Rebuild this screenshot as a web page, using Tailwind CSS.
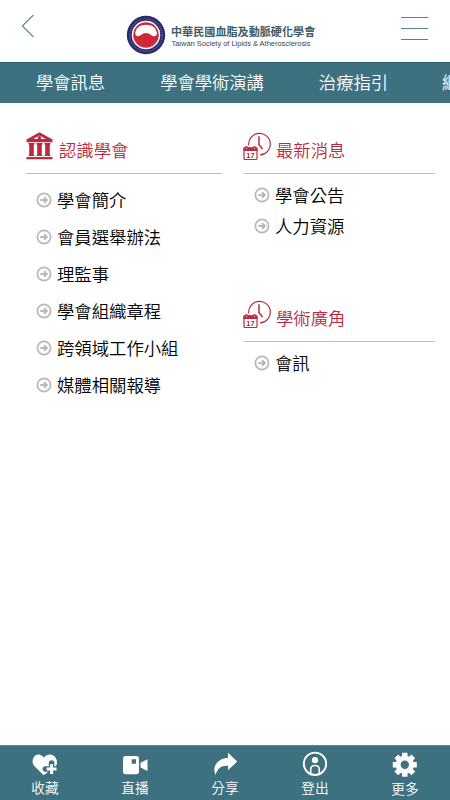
<!DOCTYPE html>
<html lang="zh-Hant">
<head>
<meta charset="utf-8">
<title>中華民國血脂及動脈硬化學會</title>
<script src="https://cdn.jsdelivr.net/npm/@tailwindcss/browser@4"></script>
</head>
<body class="w-[450px] h-[800px] overflow-hidden bg-white flex flex-col font-['Noto_Sans_CJK_TC',sans-serif] font-[350] text-black">
<svg class="hidden">
  <symbol id="arrow" viewBox="0 0 16 16"><circle cx="8" cy="8" r="6.6" fill="none" stroke="#b9b9b9" stroke-width="1.7"/><path d="M4.3 8H10M8 5.2L10.9 8L8 10.8" fill="none" stroke="#b9b9b9" stroke-width="1.9"/></symbol>
  <symbol id="calendar" viewBox="0 0 28 29">
    <path d="M5.8 13.5A10.8 10.8 0 1 1 17 22.9" fill="none" stroke="#b92940" stroke-width="1.2"/>
    <path d="M16 4.2V12.7L19.5 17" fill="none" stroke="#b92940" stroke-width="1.5"/>
    <rect x="1" y="15.9" width="13" height="11.6" rx="1" fill="#fff" stroke="#b92940" stroke-width="1.2"/>
    <path d="M.5 15.5H14.5V19H.5z" fill="#b92940"/><path d="M3.5 14V17.2M11.5 14V17.2" stroke="#b92940" stroke-width="1.7"/><path d="M3.5 15.8V17.4M11.5 15.8V17.4" stroke="#fff" stroke-width=".6"/>
    <text x="7.5" y="25.8" text-anchor="middle" font-family="Liberation Sans" font-size="7.5" font-weight="bold" fill="#b92940">17</text>
  </symbol>
</svg>
<header class="h-[62px] shrink-0 flex items-start pl-[21px]">
  <svg class="mt-[14px] w-[14px] h-[24px]" viewBox="0 0 14 24"><path d="M12.5 1L1.3 12L12.5 23" fill="none" stroke="#5c8790" stroke-width="1.1"/></svg>
  <svg class="ml-[91px] mt-[15px] w-[40px] h-[40px]" viewBox="0 0 40 40">
    <circle cx="20" cy="20" r="19.2" fill="#29296b"/>
    <circle cx="20" cy="20" r="16.2" fill="none" stroke="#6b699c" stroke-width="1.3" stroke-dasharray="1 1"/>
    <circle cx="20" cy="20" r="13.5" fill="#d22736" stroke="#fff" stroke-width="1.5"/>
    <path d="M9.2 18.6C9.4 13 14 9.7 20 9.7S30.7 13 30.9 18.6C31 21.2 27.7 22.2 25.3 20.2C22.2 17.3 18 17.2 14.9 20C12.4 22.2 9.2 21.2 9.2 18.6Z" fill="#fff"/>
  </svg>
  <div class="ml-[5px] mt-[24px] w-[146px] whitespace-nowrap">
    <div class="h-[14px] leading-[14px] text-[11.1px] font-bold text-[#405b64]">中華民國血脂及動脈硬化學會</div>
    <svg class="w-[146px] h-[11px] overflow-visible" viewBox="0 0 146 11"><text x="0.5" y="7.6" textLength="139" lengthAdjust="spacingAndGlyphs" font-family="Liberation Sans" font-size="7.9" font-weight="400" fill="#444">Taiwan Society of Lipids &amp; Atherosclerosis</text></svg>
  </div>
  <div class="ml-[84px] mt-[17px] w-[27px] flex flex-col gap-[10px]">
    <i class="h-px bg-[#55828c]"></i><i class="h-px bg-[#55828c]"></i><i class="h-px bg-[#55828c]"></i>
  </div>
</header>
<nav class="h-[41px] shrink-0 border-t border-[#235b66] bg-[#3e717f] flex items-center gap-[55px] pl-[36px] pb-[2px] overflow-hidden whitespace-nowrap text-[17.3px] leading-[24px] text-white">
  <span>學會訊息</span><span>學會學術演講</span><span>治療指引</span><span class="-ml-px">繼續教育</span>
</nav>
<main class="flex-1 flex items-start pl-[26px] gap-[22px] text-[17.35px] leading-[24px] whitespace-nowrap">
  <section class="w-[196px]">
    <h2 class="h-[71px] border-b border-[#bebebe] flex text-[#b92940] gap-[6px]">
      <svg class="mt-[29px] w-[27px] h-[28px]" viewBox="0 0 27 28" fill="#b92940"><path fill-rule="evenodd" d="M13.5.3L26.5 7.5V10.2H.5V7.5zM13.5 3.4L7.2 7H19.8z"/><circle cx="13.5" cy="5.8" r="1.8"/><path d="M2.5 11H8.5V12.5H7.8V23H8.5V24H2.5V23H3.2V12.5H2.5zM10.5 11H16.5V12.5H15.8V23H16.5V24H10.5V23H11.2V12.5H10.5zM18.5 11H24.5V12.5H23.8V23H24.5V24H18.5V23H19.2V12.5H18.5zM.5 25H26.5V27.2H.5z"/></svg>
      <span class="mt-[35px]">認識學會</span>
    </h2>
    <ul class="pt-[7px] pl-[10px] *:h-[37px] *:flex *:items-center *:gap-[5px]">
      <li><svg class="size-4"><use href="#arrow"/></svg>學會簡介</li>
      <li><svg class="size-4"><use href="#arrow"/></svg>會員選舉辦法</li>
      <li><svg class="size-4"><use href="#arrow"/></svg>理監事</li>
      <li><svg class="size-4"><use href="#arrow"/></svg>學會組織章程</li>
      <li><svg class="size-4"><use href="#arrow"/></svg>跨領域工作小組</li>
      <li><svg class="size-4"><use href="#arrow"/></svg>媒體相關報導</li>
    </ul>
  </section>
  <section class="w-[191px]">
    <h2 class="h-[71px] border-b border-[#bebebe] flex text-[#b92940] gap-[5px]">
      <svg class="-ml-px mt-[29px] w-[28px] h-[29px]"><use href="#calendar"/></svg><span class="mt-[35px]">最新消息</span>
    </h2>
    <ul class="h-[97px] pt-[5px] pl-[10px] *:h-[31.5px] *:flex *:items-center *:gap-[5px]">
      <li><svg class="size-4"><use href="#arrow"/></svg>學會公告</li>
      <li><svg class="size-4"><use href="#arrow"/></svg>人力資源</li>
    </ul>
    <h2 class="h-[71px] border-b border-[#bebebe] flex text-[#b92940] gap-[5px]">
      <svg class="-ml-px mt-[29px] w-[28px] h-[29px]"><use href="#calendar"/></svg><span class="mt-[35px]">學術廣角</span>
    </h2>
    <ul class="pt-[5px] pl-[10px] *:h-[31.5px] *:flex *:items-center *:gap-[5px]">
      <li><svg class="size-4"><use href="#arrow"/></svg>會訊</li>
    </ul>
  </section>
</main>
<footer class="h-[55px] shrink-0 border-t border-[#5c8994] bg-[#3e717f] grid grid-cols-5 text-white text-[13.7px] leading-[18px] *:flex *:flex-col *:items-center *:pt-[5px]">
  <div><svg class="w-[28px] h-[28px]" viewBox="0 0 28 28"><path d="M12.6 24.2L3.5 15.3C-1 10.5 3.2 1.5 9.5 4Q11.6 4.8 12.9 6.8Q14.2 4.8 16 4C22.5 1.4 28 8.4 25.3 14.4L17 21Z" fill="#fff"/><path d="M20.6 12V25M14.4 18H27" stroke="#3e717f" stroke-width="5.6" stroke-linecap="round"/><path d="M20.6 13.2V23M15.7 18.1H25.5" stroke="#fff" stroke-width="3"/></svg><span class="-mt-px">收藏</span></div>
  <div><svg class="w-[28px] h-[28px]" viewBox="0 0 28 28"><path fill="#fff" fill-rule="evenodd" d="M4.5 5H15.3Q18 5 18 7.7V20.5Q18 23.2 15.3 23.2H4.5Q2 23.2 2 20.5V7.7Q2 5 4.5 5ZM10.7 8.3V12.7H15V8.3ZM19.5 11.8L26.5 8.3V20L19.5 16.5Z"/></svg><span class="-mt-px">直播</span></div>
  <div><svg class="w-[28px] h-[28px]" viewBox="0 0 28 28"><path fill="#fff" d="M17 1.8L26.2 10.5L17 19.2V14.8C10.6 14.2 6.5 17.2 4.6 24C.6 15.8 6.4 7.4 17 6.7Z"/></svg><span class="-mt-px">分享</span></div>
  <div><svg class="w-[28px] h-[28px]" viewBox="0 0 28 28" fill="none" stroke="#fff"><circle cx="14" cy="12.8" r="11.2" stroke-width="1.9"/><circle cx="14" cy="9.2" r="3.1" fill="#fff" stroke="none"/><path d="M9.7 23V18.5Q9.7 14.5 14 14.5T18.3 18.5V23" stroke-width="1.6"/></svg><span class="-mt-px">登出</span></div>
  <div><svg class="w-[28px] h-[28px]" viewBox="0 0 28 28"><g transform="translate(13.8 13.8)"><circle r="9.2" fill="#fff"/><path d="M0-12V12M-12 0H12M-8.5-8.5L8.5 8.5M8.5-8.5L-8.5 8.5" stroke="#fff" stroke-width="5.4"/><circle r="4.2" fill="#3e717f"/></g></svg><span>更多</span></div>
</footer>
</body>
</html>
